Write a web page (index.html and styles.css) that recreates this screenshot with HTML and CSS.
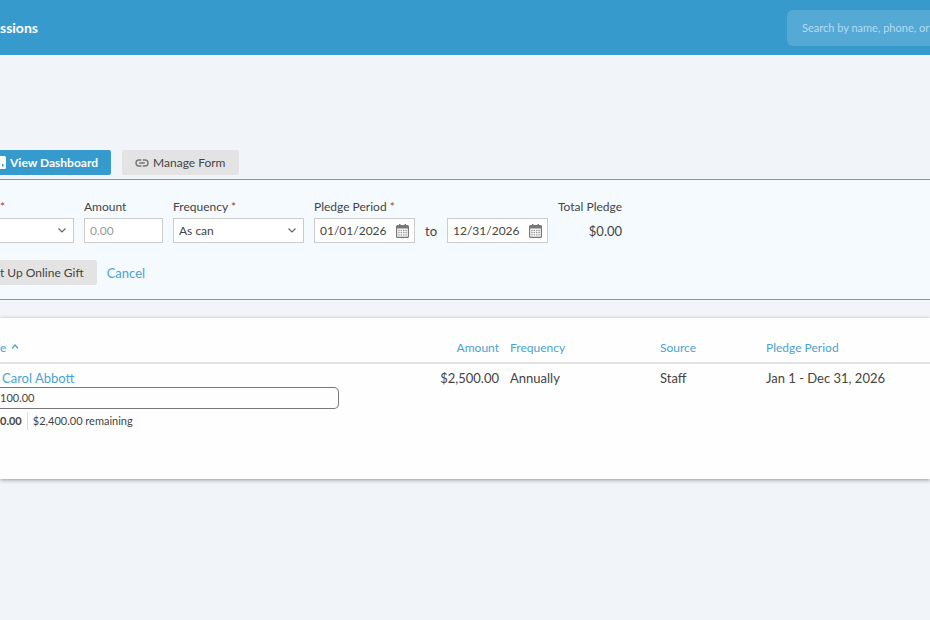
FILE: index.html
```html
<!DOCTYPE html>
<html lang="en">

<head>
    <meta charset="UTF-8">
    <meta name="viewport" content="width=device-width, initial-scale=1.0">
    <title>Pledges</title>
    <link rel="stylesheet" href="styles.css">
</head>

<body>
    <header class="topbar">
        <a class="topbar-link" href="#">ssions</a>
        <input class="search" type="text" placeholder="Search by name, phone, or" aria-label="Search">
    </header>

    <main>
        <div class="toolbar">
            <button type="button" class="btn btn-primary btn-cut">
                <svg class="icon-chart" width="6" height="13" viewBox="0 0 6 13" aria-hidden="true">
                    <path d="M0 0h4.500a1.500 1.500 0 0 1 1.500 1.500v10a1.500 1.500 0 0 1-1.500 1.500H0z" fill="#fff"/>
                    <path d="M2 8h1.500v2.500H2z" fill="#379acd"/>
                </svg>
                View Dashboard
            </button>
            <button type="button" class="btn">
                <svg width="14" height="8" viewBox="0 0 14 8" fill="none" stroke="#777" stroke-width="1.400" aria-hidden="true">
                    <path d="M6.300 1H4a3 3 0 0 0 0 6h2.300M7.700 1H10a3 3 0 0 1 0 6H7.700M4.200 4h5.600"/>
                </svg>
                Manage Form
            </button>
        </div>

        <form class="pledge-form">
            <div class="fields">
                <div class="field field-fund">
                    <label for="fund"><span class="required">*</span></label>
                    <div class="select-wrap">
                        <select id="fund" class="control control-cut" aria-label="Fund">
                            <option></option>
                        </select>
                        <svg class="chevron" width="8" height="5" viewBox="0 0 8 5" aria-hidden="true"><path d="M.5.5 4 4 7.500.5"/></svg>
                    </div>
                </div>
                <div class="field field-amount">
                    <label for="amount">Amount</label>
                    <input id="amount" class="control" type="text" placeholder="0.00">
                </div>
                <div class="field field-frequency">
                    <label for="frequency">Frequency <span class="required">*</span></label>
                    <div class="select-wrap">
                        <select id="frequency" class="control">
                            <option>As can</option>
                        </select>
                        <svg class="chevron" width="8" height="5" viewBox="0 0 8 5" aria-hidden="true"><path d="M.5.5 4 4 7.500.5"/></svg>
                    </div>
                </div>
                <div class="field">
                    <label for="start">Pledge Period <span class="required">*</span></label>
                    <div class="period">
                        <div class="control date">
                            <input id="start" type="text" value="01/01/2026">
                            <button type="button" aria-label="Choose start date">
                                <svg width="13" height="14" viewBox="0 0 13 14" aria-hidden="true">
                                    <path d="M1.500 1H3V0h1.500v1h4V0H10v1h1.500A1.500 1.500 0 0 1 13 2.500v10a1.500 1.500 0 0 1-1.500 1.500h-10A1.500 1.500 0 0 1 0 12.500v-10A1.500 1.500 0 0 1 1.500 1z" fill="#777"/>
                                    <path d="M1.200 4.500h10.600v8.200H1.200z" fill="#fff"/>
                                    <path d="M2.200 6.500h8.600M2.200 8.700h8.600M2.200 10.900h8.600" stroke="#999" stroke-width="1.300" stroke-dasharray="1.500 .87"/>
                                </svg>
                            </button>
                        </div>
                        <span>to</span>
                        <div class="control date">
                            <input id="end" type="text" value="12/31/2026" aria-label="Pledge period end">
                            <button type="button" aria-label="Choose end date">
                                <svg width="13" height="14" viewBox="0 0 13 14" aria-hidden="true">
                                    <path d="M1.500 1H3V0h1.500v1h4V0H10v1h1.500A1.500 1.500 0 0 1 13 2.500v10a1.500 1.500 0 0 1-1.500 1.500h-10A1.500 1.500 0 0 1 0 12.500v-10A1.500 1.500 0 0 1 1.500 1z" fill="#777"/>
                                    <path d="M1.200 4.500h10.600v8.200H1.200z" fill="#fff"/>
                                    <path d="M2.200 6.500h8.600M2.200 8.700h8.600M2.200 10.900h8.600" stroke="#999" stroke-width="1.300" stroke-dasharray="1.500 .87"/>
                                </svg>
                            </button>
                        </div>
                    </div>
                </div>
                <div class="field field-total">
                    <label for="total">Total Pledge</label>
                    <output id="total">$0.00</output>
                </div>
            </div>
            <div class="actions">
                <button type="button" class="btn btn-cut">t Up Online Gift</button>
                <a href="#">Cancel</a>
            </div>
        </form>

        <section class="card">
            <table class="pledges">
                <thead>
                    <tr>
                        <th class="col-name"><a href="#">e <svg class="sort" width="8" height="5" viewBox="0 0 8 5" aria-hidden="true"><path d="M1 4.500 4 1l3 3.500"/></svg></a></th>
                        <th class="col-amount"><a href="#">Amount</a></th>
                        <th class="col-frequency"><a href="#">Frequency</a></th>
                        <th class="col-source"><a href="#">Source</a></th>
                        <th class="col-period"><a href="#">Pledge Period</a></th>
                    </tr>
                </thead>
                <tbody>
                    <tr>
                        <td class="col-name">
                            <a class="donor" href="#">Carol Abbott</a>
                            <div class="progress">100.00</div>
                            <div class="summary"><strong>0.00</strong><span>$2,400.00 remaining</span></div>
                        </td>
                        <td class="col-amount">$2,500.00</td>
                        <td>Annually</td>
                        <td>Staff</td>
                        <td>Jan 1 - Dec 31, 2026</td>
                    </tr>
                </tbody>
            </table>
        </section>
    </main>
</body>

</html>
```
FILE: styles.css
```css
* {
    box-sizing: border-box;
}

body {
    margin: 0;
    background: #f1f5fa;
    color: #444;
    font-family: Lato, "Liberation Sans", sans-serif;
    font-size: 13px;
    line-height: 18px;
}

main {
    padding-bottom: 20px;
}

input,
select,
button {
    font: inherit;
    color: inherit;
}

a {
    color: #4ba3d1;
    text-decoration: none;
}

/* Top bar */
.topbar {
    display: flex;
    align-items: center;
    justify-content: space-between;
    height: 55px;
    background: #379acd;
}

.topbar-link {
    color: #fff;
    font-size: 14px;
    font-weight: bold;
}

.search {
    width: 143px;
    height: 36px;
    padding: 0 0 0 15px;
    border: 0;
    border-radius: 6px 0 0 6px;
    background: #54a9d5;
    color: #fff;
    font-size: 11px;
}

.search::placeholder {
    color: #b5dbef;
    opacity: 1;
}

/* Buttons */
.toolbar {
    display: flex;
    gap: 11px;
    padding: 95px 0 4px;
}

.btn {
    display: flex;
    align-items: center;
    gap: 4px;
    height: 25px;
    padding: 0 13px;
    border: 0;
    border-radius: 2px;
    background: #e3e3e3;
    font-size: 12px;
    white-space: nowrap;
}

.btn-primary {
    background: #379acd;
    color: #fff;
    font-weight: bold;
}

.btn-cut {
    padding-left: 0;
    border-radius: 0 2px 2px 0;
}

/* Pledge form */
.pledge-form {
    padding: 18px 0 14px;
    border-top: 1px solid #55a8d4;
    border-bottom: 1px solid #55a8d4;
    background: #f4fafd;
}

.fields {
    display: flex;
    gap: 10px;
}

.field label {
    display: block;
    height: 20px;
    font-size: 12px;
    white-space: nowrap;
}

.required {
    color: #b03a20;
}

.field-fund {
    width: 74px;
}

.field-amount {
    width: 79px;
}

.field-frequency {
    width: 131px;
}

.control {
    width: 100%;
    height: 25px;
    padding: 0 5px;
    border: 1px solid #ccc;
    border-radius: 0;
    background: #fff;
    font-size: 12px;
    appearance: none;
}

.control::placeholder {
    color: #999;
    opacity: 1;
}

.control-cut {
    border-left: 0;
}

.select-wrap {
    position: relative;
}

.chevron {
    position: absolute;
    top: 10px;
    right: 8px;
    pointer-events: none;
    fill: none;
    stroke: #666;
    stroke-width: 1.2;
}

.period {
    display: flex;
    align-items: center;
    gap: 10px;
}

.date {
    display: flex;
    align-items: center;
    width: 101px;
}

.date input {
    flex: 1;
    min-width: 0;
    padding: 0;
    border: 0;
    background: none;
}

.date button {
    display: flex;
    padding: 0;
    border: 0;
    background: none;
}

.field-total {
    text-align: right;
}

.field-total output {
    display: block;
    line-height: 26px;
}

.actions {
    display: flex;
    align-items: center;
    gap: 10px;
    margin-top: 16px;
}

/* Pledge list */
.card {
    margin-top: 18px;
    padding: 16px 0 0;
    min-height: 161px;
    background: #fefefe;
    box-shadow: 0 1px 4px rgba(0, 0, 0, 0.4);
}

.pledges {
    width: 100%;
    border-collapse: collapse;
    table-layout: fixed;
}

.pledges th {
    padding: 5px 5px 5px 6px;
    border-bottom: 2px solid #e2e2e2;
    font-size: 12px;
    font-weight: normal;
    text-align: left;
}

.pledges td {
    padding: 5px 5px 5px 6px;
    vertical-align: top;
}

.pledges .col-name {
    padding-left: 0;
}

.pledges .col-amount {
    width: 80px;
    padding-left: 0;
    text-align: right;
}

.col-frequency {
    width: 150px;
}

.col-source {
    width: 106px;
}

.col-period {
    width: 170px;
}

.sort {
    margin: 0 0 3px 2px;
    fill: none;
    stroke: #4ba3d1;
    stroke-width: 1.2;
}

.donor {
    padding-left: 2px;
}

.progress {
    width: 81%;
    height: 22px;
    border: 1px solid #777;
    border-left: 0;
    border-radius: 0 5px 5px 0;
    font-size: 11px;
    line-height: 20px;
}

.summary {
    display: flex;
    align-items: center;
    margin-top: 3px;
    font-size: 11px;
}

.summary span {
    margin-left: 5px;
    padding-left: 5px;
    border-left: 1px solid #ddd;
}
```
